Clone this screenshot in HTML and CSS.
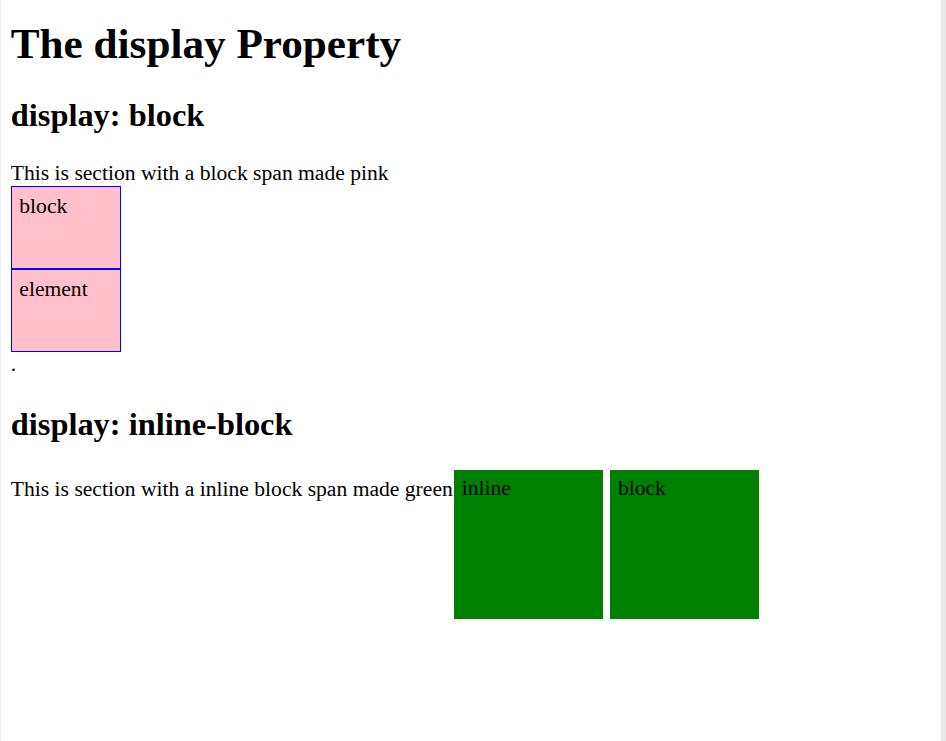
FILE: index.html
```html
<!DOCTYPE html>
<html>
<head>
<meta charset="utf-8">
<title>The display Property</title>
<link rel="stylesheet" href="styles.css">
</head>
<body>
<h1 class="title">The display Property</h1>
<h2 class="section-title">display: block</h2>
<p class="text">This is section with a block span made pink <span class="pink-block">block</span><span class="pink-block">element</span>.</p>
<h2 class="section-title section-title-next">display: inline-block</h2>
<p class="text">This is section with a inline block span made green<span class="green-box">inline</span> <span class="green-box">block</span></p>
</body>
</html>
```
FILE: styles.css
```css
html {
  border-left: 1px solid #efefef;
  border-right: 5px solid #e9e9e9;
  min-height: 100%;
  box-sizing: border-box;
  background: #fff;
}

body {
  margin: 0 10.8px 10.8px 9.8px;
  font-family: "Liberation Serif", "Times New Roman", serif;
  font-size: 21.6px;
  color: #000;
}

.title {
  font-size: 43.2px;
  font-weight: bold;
  margin: 19px 0 28.9px;
}

.section-title {
  font-size: 32.4px;
  font-weight: bold;
  margin: 26.9px 0;
}

.section-title-next {
  margin-top: 29px;
}

.text {
  margin: 21.6px 0;
}

.pink-block {
  display: block;
  width: 93.75px;
  height: 67.5px;
  padding: 6.75px 6.75px 6.75px 7.5px;
  background: pink;
  border: 1px solid blue;
}

.green-box {
  display: inline-block;
  width: 134.5px;
  height: 135.5px;
  padding: 6.75px 6.75px 6.75px 7.5px;
  margin: 0 0.5px 0 1.5px;
  background: green;
}
```
